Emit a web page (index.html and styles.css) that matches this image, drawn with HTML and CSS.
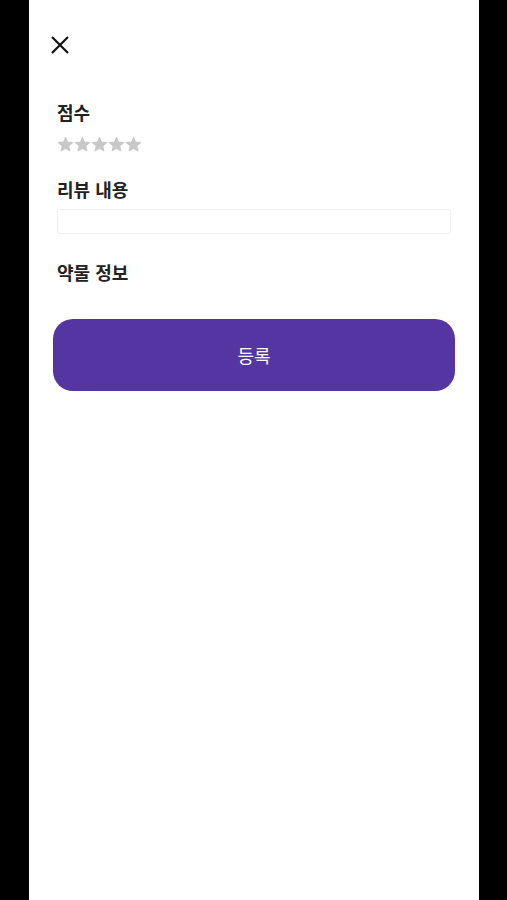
FILE: index.html
```html
<!DOCTYPE html>
<html lang="ko">
<head>
    <meta charset="UTF-8">
    <meta name="viewport" content="width=device-width, initial-scale=1.0">
    <title>리뷰 작성</title>
    <link rel="stylesheet" href="styles.css">
</head>
<body>
    <div class="screen">
        <header class="top-bar">
            <button class="close-btn" type="button" aria-label="닫기">
                <svg width="20" height="20" viewBox="0 0 20 20">
                    <path d="M2 2L18 18M18 2L2 18" stroke="#111" stroke-width="2.2" fill="none"/>
                </svg>
            </button>
        </header>
        <form class="review-form">
            <h3 class="field-label">점수</h3>
            <div class="stars">
                <svg class="star" viewBox="0 0 24 24"><path d="M12 17.27L18.18 21l-1.64-7.03L22 9.24l-7.19-.61L12 2 9.19 8.63 2 9.24l5.46 4.73L5.82 21z"/></svg>
                <svg class="star" viewBox="0 0 24 24"><path d="M12 17.27L18.18 21l-1.64-7.03L22 9.24l-7.19-.61L12 2 9.19 8.63 2 9.24l5.46 4.73L5.82 21z"/></svg>
                <svg class="star" viewBox="0 0 24 24"><path d="M12 17.27L18.18 21l-1.64-7.03L22 9.24l-7.19-.61L12 2 9.19 8.63 2 9.24l5.46 4.73L5.82 21z"/></svg>
                <svg class="star" viewBox="0 0 24 24"><path d="M12 17.27L18.18 21l-1.64-7.03L22 9.24l-7.19-.61L12 2 9.19 8.63 2 9.24l5.46 4.73L5.82 21z"/></svg>
                <svg class="star" viewBox="0 0 24 24"><path d="M12 17.27L18.18 21l-1.64-7.03L22 9.24l-7.19-.61L12 2 9.19 8.63 2 9.24l5.46 4.73L5.82 21z"/></svg>
            </div>
            <h3 class="field-label label-review">리뷰 내용</h3>
            <input class="review-input" type="text">
            <h3 class="field-label label-drug">약물 정보</h3>
            <button class="submit-btn" type="button">등록</button>
        </form>
    </div>
</body>
</html>
```

FILE: styles.css
```css
body {
    margin: 0;
    padding: 0;
    background: #000;
    font-family: "Noto Sans CJK KR", "Noto Sans", sans-serif;
}
.screen {
    width: 450px;
    min-height: 900px;
    margin-left: 29px;
    background: #fff;
}
.top-bar {
    padding: 35px 0 45px 21px;
    height: 20px;
}
.close-btn {
    display: block;
    width: 20px;
    height: 20px;
    padding: 0;
    border: none;
    background: none;
}
.close-btn svg {
    display: block;
}
.review-form {
    padding: 0 24px;
}
.field-label {
    margin: 0;
    padding-left: 4px;
    font-size: 18px;
    line-height: 24px;
    font-weight: 700;
    color: #222;
}
.stars {
    display: flex;
    padding-left: 4px;
    margin-top: 12px;
    height: 17px;
}
.star {
    width: 17px;
    height: 17px;
    fill: #c8c8c8;
    stroke: #c8c8c8;
    stroke-width: 1.5;
    stroke-linejoin: round;
}
.label-review {
    margin-top: 24px;
}
.review-input {
    display: block;
    box-sizing: border-box;
    width: 394px;
    height: 25px;
    margin: 8px 0 0 4px;
    border: 1px solid #f1f1f1;
    border-radius: 2px;
    outline: none;
}
.label-drug {
    margin-top: 26px;
}
.submit-btn {
    display: block;
    width: 402px;
    height: 72px;
    margin-top: 35px;
    border: none;
    border-radius: 20px;
    background: #5435a1;
    color: #fff;
    font-family: "Noto Sans CJK KR", "Noto Sans", sans-serif;
    font-size: 18px;
    font-weight: 400;
}
```
